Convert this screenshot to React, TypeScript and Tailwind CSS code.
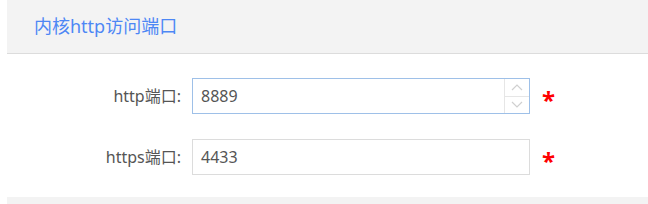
import React from 'react'

const font = { fontFamily: '"Noto Sans", "Noto Sans CJK SC", sans-serif' }

function Spinner() {
  return (
    <div className="flex flex-col w-[25px] h-full border-l border-[#e6e6e6]">
      <div className="flex-1 flex items-center justify-center border-b border-[#e6e6e6]">
        <svg width="12" height="7" viewBox="0 0 12 7" fill="none" stroke="#d0d0d0" strokeWidth="1.2">
          <path d="M1 6 L6 1 L11 6" />
        </svg>
      </div>
      <div className="flex-1 flex items-center justify-center">
        <svg width="12" height="7" viewBox="0 0 12 7" fill="none" stroke="#d0d0d0" strokeWidth="1.2">
          <path d="M1 1 L6 6 L11 1" />
        </svg>
      </div>
    </div>
  )
}

function Row({ label, value, focused, spinner }: { label: string; value: string; focused?: boolean; spinner?: boolean }) {
  return (
    <div className="flex items-center h-[36px]">
      <div className="w-[174px] text-right text-[16px] text-[#555]">{label}</div>
      <div
        className={`ml-[11px] w-[338px] h-[36px] flex items-stretch border ${focused ? 'border-[#9ec0e8]' : 'border-[#dcdcdc]'} bg-white`}
      >
        <div className="flex-1 flex items-center pl-[8px] text-[16px] text-[#555]">{value}</div>
        {spinner && <Spinner />}
      </div>
      <span className="ml-[12px] text-[#ff0000] text-[24px] font-bold leading-none mt-[8px]">*</span>
    </div>
  )
}

export default function App() {
  return (
    <div className="w-[648px] h-[204px] bg-white pl-[7px] overflow-hidden" style={font}>
      <div className="h-[54px] bg-[#f3f3f3] border-b border-[#dcdcdc] flex items-center pl-[27px] text-[18px] text-[#4d87f5]">
        内核http访问端口
      </div>
      <div className="pt-[24px] flex flex-col gap-[25px]">
        <Row label="http端口:" value="8889" focused spinner />
        <Row label="https端口:" value="4433" />
      </div>
      <div className="mt-[22px] h-[20px] bg-[#f3f3f3]" />
    </div>
  )
}
